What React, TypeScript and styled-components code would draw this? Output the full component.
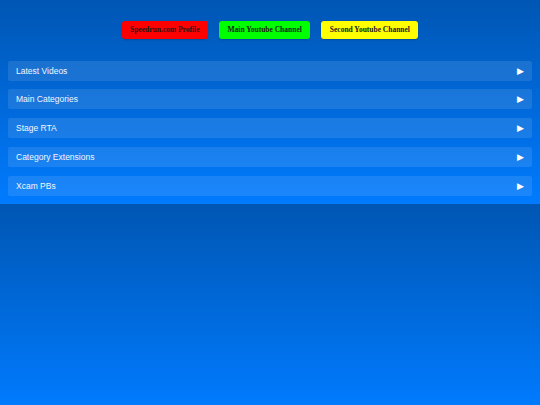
import styled, { createGlobalStyle } from 'styled-components';

const GlobalStyle = createGlobalStyle`
  html {
    background: linear-gradient(#0056b3, #007bff);
  }
  body {
    margin: 0;
    font-family: "Liberation Sans", Arial, sans-serif;
  }
`;

interface LinkButtonProps {
  $bg: string;
}

const Page = styled.div`
  padding: 21px 8px 8px;
`;

const Links = styled.nav`
  display: flex;
  justify-content: center;
  gap: 11px;
  margin-bottom: 21.5px;
`;

const LinkButton = styled.a<LinkButtonProps>`
  display: block;
  height: 18px;
  line-height: 18px;
  padding: 0 8.5px;
  border-radius: 3px;
  background-color: ${({ $bg }) => $bg};
  color: #1a1a1a;
  font-family: "Liberation Serif", "Times New Roman", serif;
  font-weight: bold;
  font-size: 7.5px;
  text-decoration: none;
  box-shadow: 0 1px 2px rgba(0, 0, 0, 0.2);
  cursor: pointer;
`;

const Sections = styled.ul`
  list-style: none;
  margin: 0;
  padding: 0;
  display: flex;
  flex-direction: column;
  gap: 8.75px;
`;

const SectionRow = styled.li`
  display: flex;
  align-items: center;
  justify-content: space-between;
  height: 20px;
  padding: 0 8px;
  border-radius: 2px;
  background-color: rgba(255, 255, 255, 0.1);
  color: #f2f6ff;
  font-size: 8.5px;
  cursor: pointer;
`;

const Arrow = styled.span`
  font-size: 9px;
  color: #ffffff;
`;

const LINKS = [
  { label: 'Speedrun.com Profile', bg: '#ff0000' },
  { label: 'Main Youtube Channel', bg: '#00ff00' },
  { label: 'Second Youtube Channel', bg: '#ffff00' },
];

const SECTIONS = [
  'Latest Videos',
  'Main Categories',
  'Stage RTA',
  'Category Extensions',
  'Xcam PBs',
];

export default function App() {
  return (
    <>
      <GlobalStyle />
      <Page>
        <Links>
          {LINKS.map(({ label, bg }) => (
            <LinkButton key={label} $bg={bg}>
              {label}
            </LinkButton>
          ))}
        </Links>
        <Sections>
          {SECTIONS.map((name) => (
            <SectionRow key={name}>
              {name}
              <Arrow>▶</Arrow>
            </SectionRow>
          ))}
        </Sections>
      </Page>
    </>
  );
}
